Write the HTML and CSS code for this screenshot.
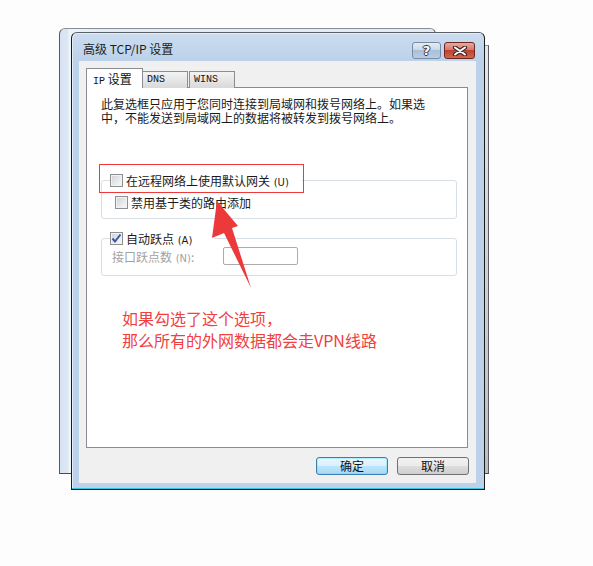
FILE: index.html
```html
<!DOCTYPE html>
<html lang="zh-CN">
    <head>
        <title>高级 TCP/IP 设置</title>
        <meta charset="utf-8">
        <meta name="viewport" content="width=device-width, initial-scale=1.0">
        <link rel="stylesheet" href="styles.css">
    </head>
    <body>
        <div class="desktop">
            <div class="window-back"></div>
            <div class="window-back window-back-right"></div>

            <div class="dialog">
                <div class="titlebar">
                    <span class="title">高级 TCP/IP 设置</span>
                    <div class="caption-buttons">
                        <span class="cap-btn cap-help">?</span>
                        <span class="cap-btn cap-close">
                            <svg width="16" height="10" viewBox="0 0 16 10">
                                <path d="M3 1.5 L13 8.5 M13 1.5 L3 8.5" stroke="#3a2a28" stroke-width="4.2" stroke-linecap="round"/>
                                <path d="M3 1.5 L13 8.5 M13 1.5 L3 8.5" stroke="#fff" stroke-width="2" stroke-linecap="round"/>
                            </svg>
                        </span>
                    </div>
                </div>

                <div class="client">
                    <div class="tabs">
                        <span class="tab active"><span class="mono">IP</span> 设置</span>
                        <span class="tab tab-dns mono">DNS</span>
                        <span class="tab tab-wins mono">WINS</span>
                    </div>

                    <div class="panel">
                        <p class="desc"><span class="desc-line">此复选框只应用于您同时连接到局域网和拨号网络上。如果选</span><span class="desc-line">中，不能发送到局域网上的数据将被转发到拨号网络上。</span></p>

                        <fieldset class="group group-gateway">
                            <legend>
                                <span class="check"><span class="box"></span><span class="check-text">在远程网络上使用默认网关 <span class="key">(U)</span></span></span>
                            </legend>
                            <span class="check sub"><span class="box"></span><span class="check-text">禁用基于类的路由添加</span></span>
                        </fieldset>

                        <fieldset class="group group-metric">
                            <legend>
                                <span class="check"><span class="box checked">
                                    <svg width="11" height="11" viewBox="0 0 11 11">
                                        <path d="M1.5 5.5 L4 8.5 L9.5 1.5" fill="none" stroke="#3a55a8" stroke-width="2"/>
                                    </svg>
                                </span><span class="check-text">自动跃点 <span class="key">(A)</span></span></span>
                            </legend>
                            <div class="field">
                                <span class="field-label">接口跃点数 <span class="key">(N)</span>:</span>
                                <span class="input"></span>
                            </div>
                        </fieldset>

                        <p class="note">如果勾选了这个选项，<br>那么所有的外网数据都会走VPN线路</p>
                    </div>

                    <div class="actions">
                        <button class="btn btn-default">确定</button>
                        <button class="btn">取消</button>
                    </div>
                </div>
            </div>

            <div class="highlight"></div>
            <svg class="arrow" width="593" height="566" viewBox="0 0 593 566">
                <polygon points="217,201 238,226 232,228 251,288 224,233 212,238" fill="#ec3a3a"/>
            </svg>
        </div>
    </body>
</html>
```

FILE: styles.css
```css
* {
    margin: 0;
    padding: 0;
    box-sizing: border-box;
}
body {
    width: 593px;
    height: 566px;
    background-color: #fdfdfd;
    font-family: "Noto Sans CJK SC", "Liberation Sans", sans-serif;
    font-size: 12px;
    color: #1a1a1a;
}
.desktop {
    position: relative;
    width: 593px;
    height: 566px;
}

/* windows behind */
.window-back {
    position: absolute;
    left: 59px;
    top: 28px;
    width: 377px;
    height: 446px;
    border: 1px solid #5a5a5a;
    border-color: #8a8e94 #5a5a5a #4a4a4a #5a5a5a;
    border-radius: 6px 6px 0 0;
    background: linear-gradient(90deg, #d6e3f1 0, #dce7f3 8px, #eef3f9 9px, #eef3f9 12px, #e3ebf4 40px);
}
.window-back-right {
    left: 300px;
    top: 45px;
    width: 189px;
    height: 429px;
    border-radius: 0;
    background: linear-gradient(180deg, #e4e8ee, #b9bfc7);
}

/* dialog frame */
.dialog {
    position: absolute;
    left: 71px;
    top: 32px;
    width: 414px;
    height: 458px;
    border: 1px solid #1b1b1b;
    border-top-color: #5b5f66;
    border-radius: 6px 6px 0 0;
    padding: 0 8px 6px 7px;
    display: flex;
    flex-direction: column;
    background: linear-gradient(180deg, #cbdcef 0, #bcd2ea 28px, #bcd2ea 100%);
    box-shadow: inset 0 -1px 0 #3cc2e4, inset 1px 1px 0 #e3edf8;
}
.titlebar {
    height: 28px;
    display: flex;
    justify-content: space-between;
    align-items: flex-start;
    padding: 0 1px 0 4px;
}
.title {
    margin-top: 8px;
    font-size: 12px;
    line-height: 15px;
    color: #1d1d1d;
}
.caption-buttons {
    display: flex;
    gap: 3px;
    margin-top: 9px;
}
.cap-btn {
    height: 17px;
    border-radius: 3px;
    display: flex;
    justify-content: center;
    align-items: center;
}
.cap-help {
    width: 29px;
    border: 1px solid #7a8aa3;
    background: linear-gradient(180deg, #e3ecf6 0, #c9d9ea 45%, #a9c0da 50%, #b8cde3 100%);
    color: #fff;
    font-family: "DejaVu Sans", sans-serif;
    font-weight: bold;
    font-size: 13px;
    line-height: 15px;
    text-shadow: 1px 0 0 #2e3540, -1px 0 0 #2e3540, 0 1px 0 #2e3540, 0 -1px 0 #2e3540;
}
.cap-close {
    width: 31px;
    border: 1px solid #6e2621;
    background: linear-gradient(180deg, #e8aa9f 0, #d7786a 45%, #c0412f 50%, #cf6a4f 100%);
}

/* client area */
.client {
    flex: 1;
    background-color: #f0f0f0;
    padding: 7px 8px 8px 7px;
    display: flex;
    flex-direction: column;
}
.tabs {
    display: flex;
    align-items: flex-end;
    height: 20px;
    margin-bottom: -1px;
    position: relative;
    z-index: 1;
}
.tab {
    height: 17px;
    width: 46px;
    border: 1px solid #8a8d94;
    border-bottom: none;
    padding-left: 4px;
    line-height: 16px;
    background: linear-gradient(180deg, #f3f3f3, #e6e6e6 50%, #d9d9d9);
    color: #111;
}
.tab.active {
    width: 57px;
    height: 20px;
    padding-left: 6px;
    line-height: 20px;
    background: #fff;
}
.tab-dns {
    margin-left: -1px;
}
.tab-wins {
    margin-left: 1px;
}
.mono {
    font-family: "Liberation Mono", monospace;
    font-size: 10px;
}
.panel {
    height: 361px;
    background-color: #fff;
    border: 1px solid #898c95;
    padding: 0 10px 0 14px;
}
.desc {
    margin-top: 9px;
    display: flex;
    flex-direction: column;
}
.desc-line {
    height: 14px;
    line-height: 14px;
    white-space: nowrap;
}

/* group boxes */
.group {
    border: 1px solid #d5dfe5;
    border-radius: 3px;
    padding: 9px 10px 9px 8px;
}
.group legend {
    height: 13px;
    line-height: 13px;
    background: #fff;
}
.group-gateway {
    margin-top: 49px;
}
.group-gateway legend {
    padding-right: 13px;
}
.group-metric {
    margin-top: 13px;
    padding-top: 2px;
    padding-bottom: 10px;
}
.group-metric legend {
    padding-right: 22px;
}
.check {
    display: flex;
    align-items: center;
    gap: 3px;
    height: 13px;
    white-space: nowrap;
}
.check-text {
    display: block;
    height: 13px;
    line-height: 13px;
}
.check.sub {
    margin-left: 5px;
}
.box {
    width: 13px;
    height: 13px;
    border: 1px solid #8e8f8f;
    background: linear-gradient(135deg, #cdd1d6, #eeeff1 70%, #f7f7f7);
    box-shadow: inset 0 0 0 1px #f2f2f2;
    display: flex;
    justify-content: center;
    align-items: center;
}
.key {
    font-family: "DejaVu Sans", sans-serif;
    font-size: 10px;
    line-height: 10px;
    margin-left: 1px;
}
.field {
    display: flex;
    align-items: center;
    height: 18px;
    margin-left: 2px;
}
.field-label {
    width: 111px;
    color: #a2a2a2;
}
.input {
    width: 75px;
    height: 18px;
    border: 1px solid #acacac;
    border-radius: 2px;
    background: #fff;
}
.note {
    margin-top: 31px;
    padding-left: 21px;
    font-size: 16px;
    line-height: 22px;
    color: #f0403f;
    white-space: nowrap;
}

/* buttons */
.actions {
    display: flex;
    justify-content: flex-end;
    gap: 9px;
    margin-top: 9px;
    margin-right: -1px;
}
.btn {
    width: 72px;
    height: 18px;
    border: 1px solid #707070;
    border-radius: 3px;
    background: linear-gradient(180deg, #f2f2f2 0, #ebebeb 50%, #dddddd 51%, #cfcfcf 100%);
    font-family: "Noto Sans CJK SC", sans-serif;
    font-size: 12px;
    line-height: 16px;
    color: #111;
}
.btn-default {
    border-color: #3c7fb1;
    background: linear-gradient(180deg, #eaf6fd 0, #d9f0fc 50%, #bee6fd 51%, #a7d9f5 100%);
    box-shadow: inset 0 0 0 1px #48d8fb55;
}

/* annotations */
.highlight {
    position: absolute;
    left: 99px;
    top: 164px;
    width: 205px;
    height: 29px;
    border: 1px solid #ec3a3a;
}
.arrow {
    position: absolute;
    left: 0;
    top: 0;
    pointer-events: none;
}
```
